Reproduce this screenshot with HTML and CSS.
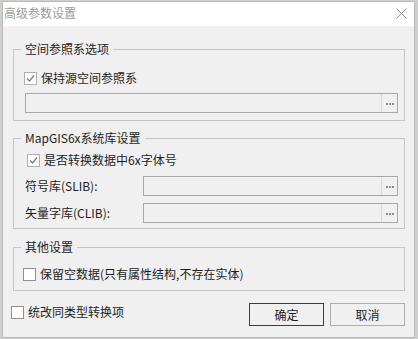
FILE: index.html
```html
<!DOCTYPE html>
<html lang="zh-CN">
<head>
  <meta charset="UTF-8" />
  <title>高级参数设置</title>
  <link rel="stylesheet" href="styles.css">
</head>
<body>

  <div class="window">
    <!-- title bar -->
    <div class="titlebar">
      <span class="title">高级参数设置</span>
      <svg class="close" width="11" height="11" viewBox="0 0 11 11">
        <path d="M0.5 0.5 L10.5 10.5 M10.5 0.5 L0.5 10.5" stroke="#8a8a8a" stroke-width="1" fill="none"/>
      </svg>
    </div>

    <div class="content">
      <fieldset class="group group-ref">
        <legend>空间参照系选项</legend>
        <div class="row">
          <span class="check checked"><svg width="11" height="11" viewBox="0 0 11 11"><path d="M2 5.5 L4.5 8 L9 2.5" stroke="#7a7a7a" stroke-width="1.2" fill="none"/></svg></span>
          <span class="label">保持源空间参照系</span>
        </div>
        <div class="picker picker-wide">
          <span class="picker-field"></span>
          <span class="picker-btn"><i></i><i></i><i></i></span>
        </div>
      </fieldset>

      <fieldset class="group group-lib">
        <legend>MapGIS6x系统库设置</legend>
        <div class="row row-check">
          <span class="check checked"><svg width="11" height="11" viewBox="0 0 11 11"><path d="M2 5.5 L4.5 8 L9 2.5" stroke="#7a7a7a" stroke-width="1.2" fill="none"/></svg></span>
          <span class="label">是否转换数据中6x字体号</span>
        </div>
        <div class="row row-field">
          <span class="field-label">符号库(SLIB):</span>
          <div class="picker">
            <span class="picker-field"></span>
            <span class="picker-btn"><i></i><i></i><i></i></span>
          </div>
        </div>
        <div class="row row-field row-last">
          <span class="field-label">矢量字库(CLIB):</span>
          <div class="picker">
            <span class="picker-field"></span>
            <span class="picker-btn"><i></i><i></i><i></i></span>
          </div>
        </div>
      </fieldset>

      <fieldset class="group group-other">
        <legend>其他设置</legend>
        <div class="row">
          <span class="check"></span>
          <span class="label">保留空数据(只有属性结构,不存在实体)</span>
        </div>
      </fieldset>

      <div class="footer">
        <div class="row footer-check">
          <span class="check"></span>
          <span class="label">统改同类型转换项</span>
        </div>
        <div class="buttons">
          <button class="btn btn-default">确定</button>
          <button class="btn">取消</button>
        </div>
      </div>
    </div>
  </div>

</body>
</html>
```

FILE: styles.css
```css
* {
  box-sizing: border-box;
  margin: 0;
  padding: 0;
}

body {
  background: #cfcfcf;
  font-family: "Noto Sans CJK SC", "Noto Sans", sans-serif;
  font-size: 12px;
  color: #1e1e1e;
}

.window {
  margin: 1px 0 0 2px;
  width: 413px;
  height: 337px;
  border: 1px solid #b9b9b9;
  background: #f0f0f0;
}

.titlebar {
  height: 24px;
  background: #fff;
  display: flex;
  align-items: center;
  justify-content: space-between;
  padding: 0 7px 2px 1px;
}

.title {
  color: #9a9a9a;
  font-size: 12px;
  line-height: 14px;
}

.content {
  padding-top: 16px;
}

.group {
  border: 1px solid #c6c6c6;
  margin: 0 9px 0 10px;
  padding: 0 6px 0 10px;
  min-width: 0;
}

legend {
  line-height: 14px;
  padding: 0 4px;
  margin-left: -3px;
}

.group-ref {
  padding-top: 12px;
  padding-bottom: 7px;
}

.group-lib {
  margin-top: 10px;
  padding-top: 5px;
  padding-bottom: 5px;
}

.group-other {
  margin-top: 11px;
  padding-top: 10px;
  padding-bottom: 6px;
}

.row {
  display: flex;
  align-items: center;
  height: 20px;
}

.check {
  width: 13px;
  height: 13px;
  border: 1px solid #8f8f8f;
  background: #fff;
  display: flex;
  align-items: center;
  justify-content: center;
  flex-shrink: 0;
}

.check.checked {
  border-color: #b0b0b0;
}

.label {
  margin-left: 4px;
  line-height: 14px;
}

.group-lib .row-check {
  margin-left: 3px;
}

.group-other .row {
  margin-left: -1px;
}

.picker {
  display: flex;
  height: 20px;
  border: 1px solid #a8a8a8;
  background: #f0f0f0;
  flex: 1;
}

.picker-wide {
  margin: 5px 0 0 1px;
}

.picker-field {
  flex: 1;
}

.picker-btn {
  width: 16px;
  border-left: 1px solid #d9d9d9;
  display: flex;
  align-items: center;
  justify-content: center;
  gap: 1px;
  padding-top: 1px;
}

.picker-btn i {
  width: 2px;
  height: 2px;
  background: #8c8c8c;
}

.row-field {
  margin-top: 6px;
}

.row-last {
  margin-top: 7px;
}

.field-label {
  width: 119px;
  padding-left: 1px;
  line-height: 14px;
}

.footer {
  display: flex;
  justify-content: space-between;
  align-items: flex-start;
  margin: 12px 9px 0 8px;
}

.footer-check {
  height: 18px;
}

.buttons {
  display: flex;
  gap: 6px;
}

.btn {
  width: 75px;
  height: 23px;
  border: 1px solid #adadad;
  background: #f0f0f0;
  font-family: "Noto Sans CJK SC", "Noto Sans", sans-serif;
  font-size: 12px;
  color: #1e1e1e;
}

.btn-default {
  border-color: #3c3c3c;
}
```
